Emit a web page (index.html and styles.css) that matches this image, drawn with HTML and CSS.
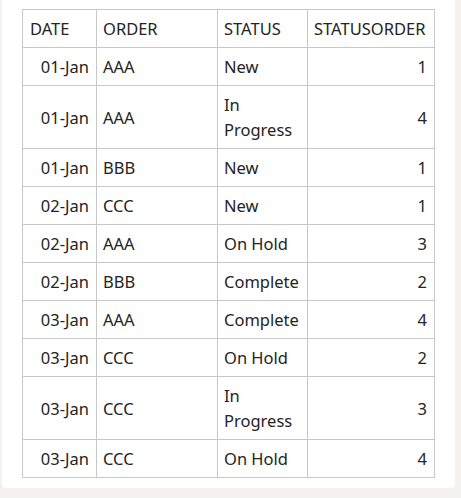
FILE: index.html
```html
<!DOCTYPE html>
<html>
<head>
<meta charset="utf-8">
<link rel="stylesheet" href="styles.css">
</head>
<body>
<div class="card">
  <table class="grid">
    <colgroup>
      <col class="c-date"><col class="c-order"><col class="c-status"><col class="c-so">
    </colgroup>
    <thead>
      <tr><th>DATE</th><th>ORDER</th><th>STATUS</th><th>STATUSORDER</th></tr>
    </thead>
    <tbody>
      <tr><td class="num">01-Jan</td><td>AAA</td><td>New</td><td class="num">1</td></tr>
      <tr><td class="num">01-Jan</td><td>AAA</td><td>In<br>Progress</td><td class="num">4</td></tr>
      <tr><td class="num">01-Jan</td><td>BBB</td><td>New</td><td class="num">1</td></tr>
      <tr><td class="num">02-Jan</td><td>CCC</td><td>New</td><td class="num">1</td></tr>
      <tr><td class="num">02-Jan</td><td>AAA</td><td>On Hold</td><td class="num">3</td></tr>
      <tr><td class="num">02-Jan</td><td>BBB</td><td>Complete</td><td class="num">2</td></tr>
      <tr><td class="num">03-Jan</td><td>AAA</td><td>Complete</td><td class="num">4</td></tr>
      <tr><td class="num">03-Jan</td><td>CCC</td><td>On Hold</td><td class="num">2</td></tr>
      <tr><td class="num">03-Jan</td><td>CCC</td><td>In<br>Progress</td><td class="num">3</td></tr>
      <tr><td class="num">03-Jan</td><td>CCC</td><td>On Hold</td><td class="num">4</td></tr>
    </tbody>
  </table>
</div>
</body>
</html>
```

FILE: styles.css
```css
html, body {
  margin: 0;
  padding: 0;
  background: #f3f2f1;
}
body {
  font-family: "Noto Sans", "Open Sans", sans-serif;
  color: #252423;
}
.card {
  margin-left: 2px;
  width: 453px;
  height: 488px;
  box-sizing: border-box;
  background: #ffffff;
  border-radius: 0 0 4px 4px;
  padding: 9px 0 0 20px;
}
.grid {
  border-collapse: collapse;
  table-layout: fixed;
  width: 413px;
  border: 1px solid #c8c8c8;
  font-size: 16.5px;
}
.c-date { width: 74px; }
.c-order { width: 121px; }
.c-status { width: 90px; }
.c-so { width: 127px; }
.grid th, .grid td {
  border: 1px solid #c8c8c8;
  padding: 6px 7px 6px 6px;
  line-height: 25px;
  text-align: left;
  font-weight: 400;
  white-space: nowrap;
  vertical-align: middle;
  overflow: visible;
}
.grid th:first-child { padding-left: 7px; }
.grid td.num { text-align: right; }
```
